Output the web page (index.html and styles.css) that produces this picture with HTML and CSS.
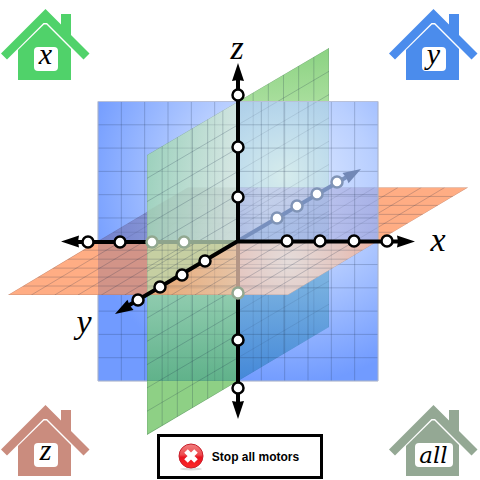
FILE: index.html
```html
<!DOCTYPE html>
<html lang="en">
<head>
<meta charset="utf-8">
<meta name="viewport" content="width=device-width, initial-scale=1">
<title>Motor control</title>
<link rel="stylesheet" href="styles.css">
</head>
<body>
<svg class="sprites" aria-hidden="true">
  <defs>
    <symbol id="house" viewBox="0 0 89 71">
      <path d="M44.5 0 0 44.5 6 50.5 42.5 14h3.5L82.5 50.5l6-6L70 26V5H60v10.5Z"/>
      <path d="M43 15.5h2.5L70 40v31H17V41Z"/>
    </symbol>
  </defs>
</svg>
<main class="stage">
  <svg class="axes" viewBox="0 0 480 480" role="img" aria-label="Motor positions along the x, y and z axes">
    <defs>
      <path id="grid" vector-effect="non-scaling-stroke" d="M0 0h12M0 1h12M0 2h12M0 3h12M0 4h12M0 5h12M0 6h12M0 7h12M0 8h12M0 9h12M0 10h12M0 11h12M0 12h12M0 0v12M1 0v12M2 0v12M3 0v12M4 0v12M5 0v12M6 0v12M7 0v12M8 0v12M9 0v12M10 0v12M11 0v12M12 0v12"/>
      <path id="head" d="M0 0-18-6-17 0-18 6Z"/>
      <circle id="dot" r="5.5"/>
      <radialGradient id="blue" gradientUnits="userSpaceOnUse" cx="282" cy="180" r="205">
        <stop offset="0" stop-color="#e2ecff"/>
        <stop offset=".45" stop-color="#b9cfff"/>
        <stop offset="1" stop-color="#719bff"/>
      </radialGradient>
      <radialGradient id="sky" gradientUnits="userSpaceOnUse" cx="284" cy="176" r="110">
        <stop offset="0" stop-color="#d6ecec"/>
        <stop offset=".5" stop-color="#bcdaec"/>
        <stop offset="1" stop-color="#a2c6e6"/>
      </radialGradient>
      <linearGradient id="deep" x1="0" y1="0" x2="0" y2="1">
        <stop offset="0" stop-color="#9cc6e4"/>
        <stop offset=".5" stop-color="#78b0e0"/>
        <stop offset="1" stop-color="#4488d8"/>
      </linearGradient>
      <linearGradient id="mint" x1="0" y1="0" x2="1" y2=".3">
        <stop offset="0" stop-color="#98d2b0"/>
        <stop offset="1" stop-color="#d8e8e0"/>
      </linearGradient>
      <linearGradient id="jade" gradientUnits="userSpaceOnUse" x1="0" y1="241" x2="0" y2="381">
        <stop offset="0" stop-color="#a8d8bc"/>
        <stop offset=".45" stop-color="#8acaa6"/>
        <stop offset="1" stop-color="#5fb384"/>
      </linearGradient>
      <linearGradient id="leaf" x1="0" y1="0" x2="0" y2="1">
        <stop offset="0" stop-color="#8bd282"/>
        <stop offset="1" stop-color="#a8de9c"/>
      </linearGradient>
      <linearGradient id="sand" gradientUnits="userSpaceOnUse" x1="165" y1="0" x2="238" y2="0">
        <stop offset="0" stop-color="#e8ac7c"/>
        <stop offset="1" stop-color="#e6c4a6"/>
      </linearGradient>
      <radialGradient id="blush" gradientUnits="userSpaceOnUse" cx="288" cy="262" r="90">
        <stop offset="0" stop-color="#e4dcda"/>
        <stop offset=".6" stop-color="#e4c6c0"/>
        <stop offset="1" stop-color="#eeb2a2"/>
      </radialGradient>
      <linearGradient id="dusk" gradientUnits="userSpaceOnUse" x1="98" y1="0" x2="378" y2="0">
        <stop offset="0" stop-color="#7078be" stop-opacity=".8"/>
        <stop offset=".3" stop-color="#8890cc" stop-opacity=".7"/>
        <stop offset=".6" stop-color="#c0c4ea" stop-opacity=".6"/>
        <stop offset="1" stop-color="#a4aae0" stop-opacity=".8"/>
      </linearGradient>
      <clipPath id="frame"><path d="M98 101.500h280v279.500H98Z"/></clipPath>
      <clipPath id="green-front"><path d="M147 155 238 101.500V241L147 295Z M147 295H238V381L147 435Z"/></clipPath>
      <clipPath id="green-back"><path d="M238 101.500 329 48V327L238 381Z"/></clipPath>
      <clipPath id="orange-front"><path d="M98 241H378L288 295H8Z"/></clipPath>
      <clipPath id="orange-back"><path d="M98 241 188 187.500H468L378 241Z"/></clipPath>
      <clipPath id="orange-right"><path d="M238 241H378L288 295H148Z"/></clipPath>
    </defs>

    <!-- planes behind the xz plane -->
    <path fill="url(#leaf)" d="M238 101.500 329 48V102H238Z"/>
    <path fill="#ffad84" d="M377 187.500H468L378 241Z"/>
    <g class="lines">
      <g clip-path="url(#green-back)"><use href="#grid" transform="matrix(15.167 -8.917 0 23.292 147 155)"/></g>
      <g clip-path="url(#orange-back)"><use href="#grid" transform="matrix(23.333 0 15 -8.958 8 295)"/></g>
    </g>

    <!-- xz plane -->
    <path fill="url(#blue)" d="M98 101.500H378V381H98Z"/>
    <g clip-path="url(#frame)">
      <path fill="url(#sky)" d="M238 101.500 329 48V187.500L238 241Z"/>
      <path fill="url(#deep)" d="M238 241 329 187.500V327L238 381Z"/>
      <path fill="url(#dusk)" d="M98 241 188 187.500H468L378 241Z"/>
      <g class="lines lines-faint">
        <g clip-path="url(#green-back)"><use href="#grid" transform="matrix(15.167 -8.917 0 23.292 147 155)"/></g>
        <g clip-path="url(#orange-back)"><use href="#grid" transform="matrix(23.333 0 15 -8.958 8 295)"/></g>
      </g>
    </g>
    <use class="lines" href="#grid" transform="matrix(23.333 0 0 23.292 98 101.500)"/>
    <path class="edge" d="M98 101.500H378V381H98Z"/>

    <!-- planes in front of the xz plane -->
    <path fill="#ffad84" d="M98 241 8 295H98Z"/>
    <path fill="#d29488" d="M98 241H148V295H98Z"/>
    <path fill="url(#mint)" opacity=".88" d="M147 155 238 101.500V241L147 295Z"/>
    <path fill="#9cae9e" opacity=".15" d="M147 211 188 187.500H238V241H147Z"/>
    <path fill="#c6cfa2" d="M147 241H238L147 295Z"/>
    <path fill="url(#jade)" opacity=".95" d="M238 241V381H147V295Z"/>
    <path fill="#8ed085" d="M147 381H238L147 435Z"/>
    <path fill="url(#sand)" d="M238 241V295H148Z"/>
    <path fill="url(#blush)" d="M238 241H378L288 295H238Z"/>
    <g class="lines lines-faint"><g clip-path="url(#orange-right)"><use href="#grid" transform="matrix(23.333 0 0 23.292 98 101.500)"/></g></g>
    <g class="lines">
      <g clip-path="url(#green-front)"><use href="#grid" transform="matrix(15.167 -8.917 0 23.292 147 155)"/></g>
      <g clip-path="url(#orange-front)"><use href="#grid" transform="matrix(23.333 0 15 -8.958 8 295)"/></g>
    </g>
    <g class="lines lines-faint" clip-path="url(#green-front)"><g clip-path="url(#frame)"><use href="#grid" transform="matrix(23.333 0 0 23.292 98 101.500)"/></g></g>

    <!-- axes -->
    <g class="shaft">
      <path class="veil-green" d="M147 242H238"/>
      <path class="veil-blue" d="M238 241 350 175"/>
      <path class="veil-orange" d="M238 241V295"/>
      <path d="M238 78V241M238 295V404M76 242H147M238 241.500H400M238 241 126 307"/>
    </g>
    <use href="#head" transform="translate(238 63) rotate(-90)"/>
    <use href="#head" transform="translate(238 419) rotate(90)"/>
    <use href="#head" transform="translate(61 241.500) rotate(180)"/>
    <use href="#head" transform="translate(415 241.500)"/>
    <use href="#head" transform="translate(115 314) rotate(149.500)"/>
    <use href="#head" fill="#7288b6" transform="translate(361 169) rotate(-30.500)"/>

    <g class="dots">
      <use href="#dot" x="238" y="95"/><use href="#dot" x="238" y="147"/><use href="#dot" x="238" y="197"/>
      <use href="#dot" x="238" y="340"/><use href="#dot" x="238" y="388"/>
      <use href="#dot" x="88" y="242"/><use href="#dot" x="120" y="242"/>
      <use href="#dot" x="287" y="241"/><use href="#dot" x="320" y="241"/><use href="#dot" x="354" y="241"/><use href="#dot" x="387" y="241"/>
      <use href="#dot" x="138" y="300"/><use href="#dot" x="160" y="287"/><use href="#dot" x="182" y="275"/><use href="#dot" x="205" y="261"/>
    </g>
    <g class="dots dots-green">
      <use href="#dot" x="152" y="242"/><use href="#dot" x="184" y="242"/><use href="#dot" x="238" y="293"/>
    </g>
    <g class="dots dots-blue">
      <use href="#dot" x="277" y="218"/><use href="#dot" x="297" y="206"/><use href="#dot" x="317" y="194"/><use href="#dot" x="337" y="182"/>
    </g>

    <g class="axis-name">
      <text x="237" y="59">z</text>
      <text x="438" y="251">x</text>
      <text x="84" y="333">y</text>
    </g>
  </svg>

  <button class="home home-x" type="button" aria-label="Home x"><svg class="house" aria-hidden="true"><use href="#house"/></svg><span class="plate">x</span></button>
  <button class="home home-y" type="button" aria-label="Home y"><svg class="house" aria-hidden="true"><use href="#house"/></svg><span class="plate">y</span></button>
  <button class="home home-z" type="button" aria-label="Home z"><svg class="house" aria-hidden="true"><use href="#house"/></svg><span class="plate">z</span></button>
  <button class="home home-all" type="button" aria-label="Home all"><svg class="house" aria-hidden="true"><use href="#house"/></svg><span class="plate plate-wide">all</span></button>

  <button class="stop" type="button">
    <svg class="stop-icon" viewBox="0 0 26 28" aria-hidden="true">
      <defs>
        <linearGradient id="red" x1="0" y1="0" x2="0" y2="1">
          <stop offset="0" stop-color="#f08080"/>
          <stop offset=".45" stop-color="#ee4a4e"/>
          <stop offset=".55" stop-color="#e81420"/>
          <stop offset="1" stop-color="#ff2828"/>
        </linearGradient>
      </defs>
      <ellipse cx="13" cy="26" rx="11" ry="1.500" fill="#ddd"/>
      <circle cx="13" cy="13" r="12" fill="url(#red)" stroke="#c8202c"/>
      <path d="M8 8 18 18M18 8 8 18" stroke="#fff" stroke-width="5"/>
    </svg>
    Stop all motors
  </button>
</main>
</body>
</html>
```
FILE: styles.css
```css
* {
  box-sizing: border-box;
}

body {
  margin: 0;
  background: #fff;
  color: #000;
}

.sprites {
  position: absolute;
  width: 0;
  height: 0;
}

.stage {
  display: grid;
  grid-template-columns: 1fr auto 1fr;
  grid-template-rows: 1fr auto;
  min-height: 100vh;
}

.axes {
  grid-area: 1 / 1 / 3 / 4;
  display: block;
  width: 100%;
  max-height: 100vh;
}

.lines {
  fill: none;
  stroke: #1c2c48;
  stroke-opacity: 0.22;
  stroke-width: 1;
}

.lines-faint {
  stroke-opacity: 0.1;
}

.edge {
  fill: none;
  stroke: #b8c0d8;
}

.shaft {
  fill: none;
  stroke: #000;
  stroke-width: 4;
}

.veil-green {
  stroke: #8fa48c;
}

.veil-blue {
  stroke: #7890be;
}

.veil-orange {
  stroke: #b49686;
}

.dots {
  fill: #fff;
  stroke: #000;
  stroke-width: 2.5;
}

.dots-green {
  stroke: #92a890;
}

.dots-blue {
  stroke: #8094b6;
}

.axis-name {
  font: italic 34px "Liberation Serif", serif;
  text-anchor: middle;
}

.home {
  display: grid;
  width: 89px;
  height: 71px;
  margin: 9px 2px 4px 1px;
  padding: 0;
  border: 0;
  background: none;
  color: #000;
  cursor: pointer;
}

.house {
  grid-area: 1 / 1;
  width: 89px;
  height: 71px;
  fill: currentColor;
}

.plate {
  grid-area: 1 / 1;
  place-self: end center;
  width: 24px;
  height: 24px;
  margin-bottom: 9px;
  border-radius: 4px;
  background: #fff;
  color: #000;
  font: italic 30px/14px "Liberation Serif", serif;
}

.plate-wide {
  width: 38px;
  font: italic 23px/24px "DejaVu Serif", serif;
}

.home-x {
  grid-area: 1 / 1;
}

.home-x .house {
  color: #50d26a;
}

.home-y {
  grid-area: 1 / 3;
  justify-self: end;
}

.home-y .house {
  color: #4b8cec;
}

.home-z {
  grid-area: 2 / 1;
}

.home-z .house {
  color: #ca8c7e;
}

.home-all {
  grid-area: 2 / 3;
  justify-self: end;
}

.home-all .house {
  color: #94a894;
}

.stop {
  grid-area: 2 / 2;
  align-self: end;
  display: flex;
  align-items: center;
  gap: 8px;
  height: 45px;
  margin-bottom: 1px;
  padding: 0 21px 0 18px;
  border: 3px solid #000;
  background: #fff;
  color: #000;
  font: bold 12px/16px "Liberation Sans", sans-serif;
  cursor: pointer;
}

.stop-icon {
  width: 26px;
  height: 28px;
}
```
